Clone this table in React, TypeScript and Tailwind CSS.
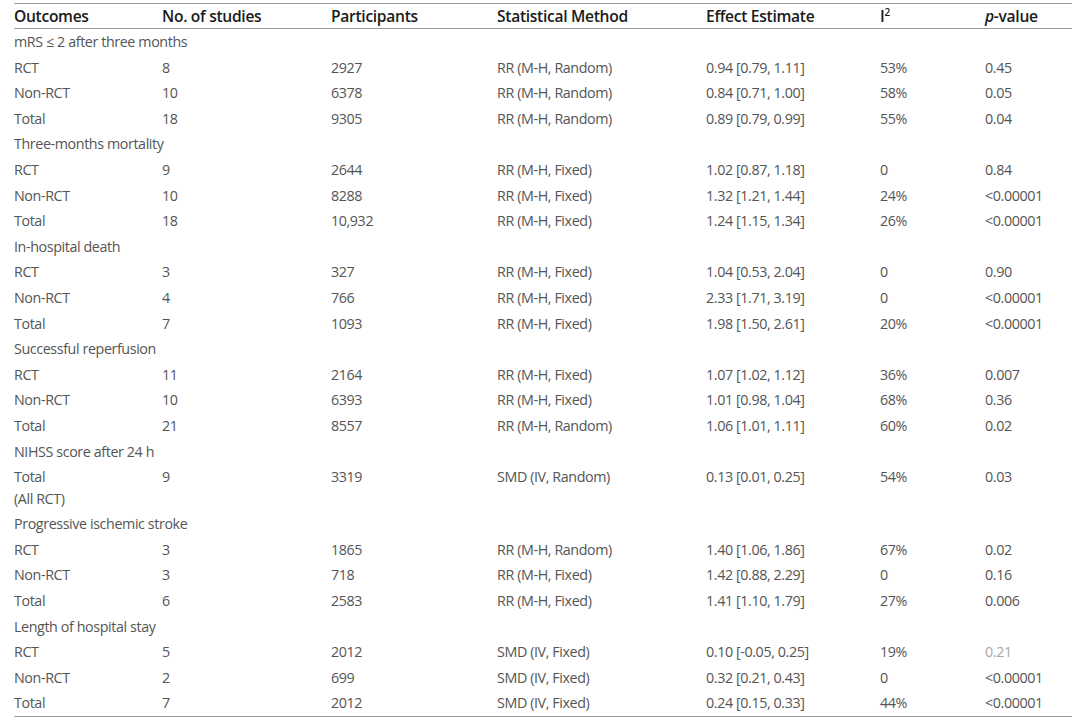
type Row = {
  label: string;
  sub?: string;
  n?: string;
  participants?: string;
  method?: string;
  effect?: string;
  i2?: string;
  p?: string;
  faded?: boolean;
};

const rows: Row[] = [
  { label: "mRS ≤ 2 after three months" },
  { label: "RCT", n: "8", participants: "2927", method: "RR (M-H, Random)", effect: "0.94 [0.79, 1.11]", i2: "53%", p: "0.45" },
  { label: "Non-RCT", n: "10", participants: "6378", method: "RR (M-H, Random)", effect: "0.84 [0.71, 1.00]", i2: "58%", p: "0.05" },
  { label: "Total", n: "18", participants: "9305", method: "RR (M-H, Random)", effect: "0.89 [0.79, 0.99]", i2: "55%", p: "0.04" },
  { label: "Three-months mortality" },
  { label: "RCT", n: "9", participants: "2644", method: "RR (M-H, Fixed)", effect: "1.02 [0.87, 1.18]", i2: "0", p: "0.84" },
  { label: "Non-RCT", n: "10", participants: "8288", method: "RR (M-H, Fixed)", effect: "1.32 [1.21, 1.44]", i2: "24%", p: "<0.00001" },
  { label: "Total", n: "18", participants: "10,932", method: "RR (M-H, Fixed)", effect: "1.24 [1.15, 1.34]", i2: "26%", p: "<0.00001" },
  { label: "In-hospital death" },
  { label: "RCT", n: "3", participants: "327", method: "RR (M-H, Fixed)", effect: "1.04 [0.53, 2.04]", i2: "0", p: "0.90" },
  { label: "Non-RCT", n: "4", participants: "766", method: "RR (M-H, Fixed)", effect: "2.33 [1.71, 3.19]", i2: "0", p: "<0.00001" },
  { label: "Total", n: "7", participants: "1093", method: "RR (M-H, Fixed)", effect: "1.98 [1.50, 2.61]", i2: "20%", p: "<0.00001" },
  { label: "Successful reperfusion" },
  { label: "RCT", n: "11", participants: "2164", method: "RR (M-H, Fixed)", effect: "1.07 [1.02, 1.12]", i2: "36%", p: "0.007" },
  { label: "Non-RCT", n: "10", participants: "6393", method: "RR (M-H, Fixed)", effect: "1.01 [0.98, 1.04]", i2: "68%", p: "0.36" },
  { label: "Total", n: "21", participants: "8557", method: "RR (M-H, Random)", effect: "1.06 [1.01, 1.11]", i2: "60%", p: "0.02" },
  { label: "NIHSS score after 24 h" },
  { label: "Total", sub: "(All RCT)", n: "9", participants: "3319", method: "SMD (IV, Random)", effect: "0.13 [0.01, 0.25]", i2: "54%", p: "0.03" },
  { label: "Progressive ischemic stroke" },
  { label: "RCT", n: "3", participants: "1865", method: "RR (M-H, Random)", effect: "1.40 [1.06, 1.86]", i2: "67%", p: "0.02" },
  { label: "Non-RCT", n: "3", participants: "718", method: "RR (M-H, Fixed)", effect: "1.42 [0.88, 2.29]", i2: "0", p: "0.16" },
  { label: "Total", n: "6", participants: "2583", method: "RR (M-H, Fixed)", effect: "1.41 [1.10, 1.79]", i2: "27%", p: "0.006" },
  { label: "Length of hospital stay" },
  { label: "RCT", n: "5", participants: "2012", method: "SMD (IV, Fixed)", effect: "0.10 [-0.05, 0.25]", i2: "19%", p: "0.21", faded: true },
  { label: "Non-RCT", n: "2", participants: "699", method: "SMD (IV, Fixed)", effect: "0.32 [0.21, 0.43]", i2: "0", p: "<0.00001" },
  { label: "Total", n: "7", participants: "2012", method: "SMD (IV, Fixed)", effect: "0.24 [0.15, 0.33]", i2: "44%", p: "<0.00001" },
];

export default function App() {
  return (
    <div className="w-[1080px] h-[725px] bg-white overflow-hidden pl-[14px] pr-[8px] pt-[3px] font-['Open_Sans',sans-serif] text-[14.3px] tracking-[-0.4px] text-[#555555]">
      <table className="w-[1058px] table-fixed border-collapse">
        <colgroup>
          <col className="w-[148px]" />
          <col className="w-[169px]" />
          <col className="w-[166px]" />
          <col className="w-[209px]" />
          <col className="w-[174px]" />
          <col className="w-[105px]" />
          <col className="w-[87px]" />
        </colgroup>
        <thead>
          <tr className="border-t border-b border-[#9c9c9c] text-left text-[15.6px] tracking-[-0.3px] text-[#1a1a1a] leading-[22px]">
            <th className="py-[1px] font-semibold">Outcomes</th>
            <th className="py-[1px] font-semibold">No. of studies</th>
            <th className="py-[1px] font-semibold">Participants</th>
            <th className="py-[1px] font-semibold">Statistical Method</th>
            <th className="py-[1px] font-semibold">Effect Estimate</th>
            <th className="py-[1px] font-semibold">
              I<span className="inline-block text-[10px] leading-none align-top translate-y-[2px]">2</span>
            </th>
            <th className="py-[1px] font-semibold">
              <i>p</i>-value
            </th>
          </tr>
        </thead>
        <tbody className="border-b border-[#9c9c9c]">
          {rows.map((r, i) => (
            <tr key={i} className="align-top leading-[21.6px]">
              {r.n === undefined ? (
                <td colSpan={7} className="pt-[2px] pb-[2px] whitespace-nowrap">
                  {r.label}
                </td>
              ) : (
                <>
                  <td className="pt-[2px] pb-[2px]">
                    {r.label}
                    {r.sub && <div>{r.sub}</div>}
                  </td>
                  <td className="pt-[2px] pb-[2px]">{r.n}</td>
                  <td className="pt-[2px] pb-[2px]">{r.participants}</td>
                  <td className="pt-[2px] pb-[2px]">{r.method}</td>
                  <td className="pt-[2px] pb-[2px]">{r.effect}</td>
                  <td className="pt-[2px] pb-[2px]">{r.i2}</td>
                  <td className={r.faded ? "pt-[2px] pb-[2px] text-[#a8a8a8]" : "pt-[2px] pb-[2px]"}>{r.p}</td>
                </>
              )}
            </tr>
          ))}
        </tbody>
      </table>
    </div>
  );
}
